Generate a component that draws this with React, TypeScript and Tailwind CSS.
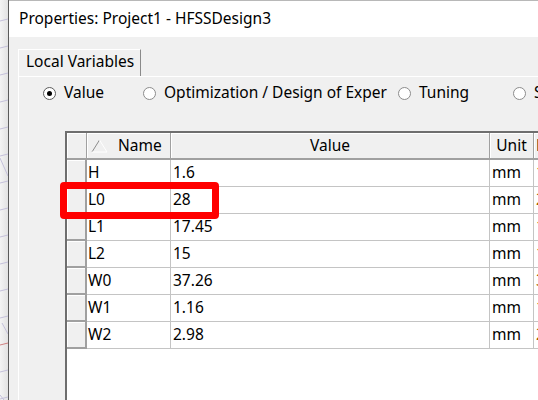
import React from 'react';

const rows = [
  { name: 'H', value: '1.6', unit: 'mm', evald: '1.6mm' },
  { name: 'L0', value: '28', unit: 'mm', evald: '28mm' },
  { name: 'L1', value: '17.45', unit: 'mm', evald: '17.45mm' },
  { name: 'L2', value: '15', unit: 'mm', evald: '15mm' },
  { name: 'W0', value: '37.26', unit: 'mm', evald: '37.26mm' },
  { name: 'W1', value: '1.16', unit: 'mm', evald: '1.16mm' },
  { name: 'W2', value: '2.98', unit: 'mm', evald: '2.98mm' },
];

function Radio({ checked, label, width }: { checked?: boolean; label: string; width: string }) {
  return (
    <div className={`flex items-center shrink-0 ${width}`}>
      <span
        className={`w-[13px] h-[13px] rounded-full bg-white border flex items-center justify-center shrink-0 ${
          checked ? 'border-[#5c5c5c]' : 'border-[#8c8c8c]'
        }`}
      >
        {checked && <span className="w-[5px] h-[5px] rounded-full bg-black" />}
      </span>
      <span className="ml-[8px] whitespace-nowrap">{label}</span>
    </div>
  );
}

function CanvasStrip() {
  // bit of the CAD view behind the dialog
  const ys = [19, 46, 73, 100, 127, 154, 181, 208, 235, 262, 289, 316, 343, 370, 397];
  return (
    <div className="w-[8px] h-full bg-gradient-to-r from-[#f4f4f4] to-[#e2e2e2] shrink-0">
      <svg width="8" height="400" viewBox="0 0 8 400">
        {ys.map((y) => (
          <line key={y} x1="0" y1={y + 2} x2="8" y2={y} stroke={y === 343 ? '#d08080' : '#c4c0da'} strokeWidth="1" />
        ))}
        <line x1="0" y1="158" x2="8" y2="176" stroke="#c4c0da" strokeWidth="1" />
        <line x1="2" y1="323" x2="8" y2="334" stroke="#c4c0da" strokeWidth="1" />
        <line x1="0" y1="395" x2="4" y2="400" stroke="#c4c0da" strokeWidth="1" />
      </svg>
    </div>
  );
}

export default function App() {
  return (
    <div className="w-[538px] h-[400px] overflow-hidden flex bg-white text-black text-[15.5px] leading-none font-['Noto_Sans',sans-serif]">
      <CanvasStrip />
      <div className="w-px bg-[#5a5a5a] shrink-0" />

      <div className="flex-1 min-w-0 flex flex-col">
        {/* title bar */}
        <div className="h-[37px] bg-white border-t border-[#b8b8b8] flex items-center pl-[10px] pb-[1px] shrink-0">
          <span className="whitespace-nowrap">Properties: Project1 - HFSSDesign3</span>
        </div>

        <div className="flex-1 bg-[#f0f0f0] pl-[9px] pt-[12px] flex flex-col min-h-0">
          {/* tab strip */}
          <div className="flex h-[27px] shrink-0">
            <div className="w-[123px] h-full bg-[#f0f0f0] border-t border-l border-white border-r border-r-[#8a8a8a] flex items-center pl-[7px] pb-[2px]">
              <span className="whitespace-nowrap">Local Variables</span>
            </div>
          </div>

          {/* tab panel */}
          <div className="relative flex-1 border-t border-l border-white flex flex-col min-h-0">
            <div className="flex items-center h-[20px] mt-[6px] ml-[24px]">
              <Radio checked label="Value" width="w-[100px]" />
              <Radio label="Optimization / Design of Exper" width="w-[255px]" />
              <Radio label="Tuning" width="w-[115px]" />
              <Radio label="Sensitivity" width="w-[120px]" />
            </div>

            {/* variables grid */}
            <div className="mt-[28px] ml-[46px] flex-1 bg-white border-t-2 border-l-2 border-[#6e6e6e]">
              <div className="flex h-[27px]">
                <div className="w-[20px] shrink-0 bg-[#f0f0f0] border-r border-b-2 border-[#a0a0a0] shadow-[inset_1px_1px_0_#ffffff]" />
                <div className="w-[84px] shrink-0 bg-[#f0f0f0] border-r border-b-2 border-[#a0a0a0] shadow-[inset_1px_1px_0_#ffffff] flex items-center">
                  <svg width="18" height="14" viewBox="0 0 18 14" className="ml-[4px]">
                    <line x1="1" y1="13" x2="8.5" y2="1" stroke="#8c8c8c" strokeWidth="1" />
                    <line x1="8.5" y1="1" x2="16" y2="13" stroke="#ffffff" strokeWidth="1" />
                    <line x1="1" y1="13" x2="16" y2="13" stroke="#ffffff" strokeWidth="1" />
                  </svg>
                  <span className="ml-[9px]">Name</span>
                </div>
                <div className="w-[319px] shrink-0 bg-[#f0f0f0] border-r border-b-2 border-[#a0a0a0] shadow-[inset_1px_1px_0_#ffffff] flex items-center justify-center">
                  Value
                </div>
                <div className="w-[44px] shrink-0 bg-[#f0f0f0] border-r border-b-2 border-[#a0a0a0] shadow-[inset_1px_1px_0_#ffffff] flex items-center justify-center">
                  Unit
                </div>
                <div className="w-[120px] shrink-0 bg-[#f0f0f0] border-b-2 border-[#a0a0a0] shadow-[inset_1px_1px_0_#ffffff] flex items-center pl-[2px]">
                  Evaluated Value
                </div>
              </div>

              {rows.map((r) => (
                <div key={r.name} className="flex h-[27px]">
                  <div className="w-[20px] shrink-0 bg-[#f0f0f0] border-r-2 border-b-2 border-[#a0a0a0] shadow-[inset_1px_1px_0_#ffffff]" />
                  <div className="w-[84px] shrink-0 border-r border-b border-[#c4c4c4] flex items-center pl-[1px]">{r.name}</div>
                  <div className="w-[319px] shrink-0 border-r border-b border-[#c4c4c4] flex items-center pl-[2px]">{r.value}</div>
                  <div className="w-[44px] shrink-0 border-r border-b border-[#c4c4c4] flex items-center pl-[2px]">{r.unit}</div>
                  <div className="w-[120px] shrink-0 border-b border-[#c4c4c4] flex items-center pl-[2px] text-[#a05a00]">{r.evald}</div>
                </div>
              ))}
            </div>

            {/* red highlight box */}
            <div className="absolute left-[41px] top-[105px] w-[159px] h-[37px] border-[7px] border-[#ff0000] rounded-[4px]" />
          </div>
        </div>
      </div>
    </div>
  );
}
